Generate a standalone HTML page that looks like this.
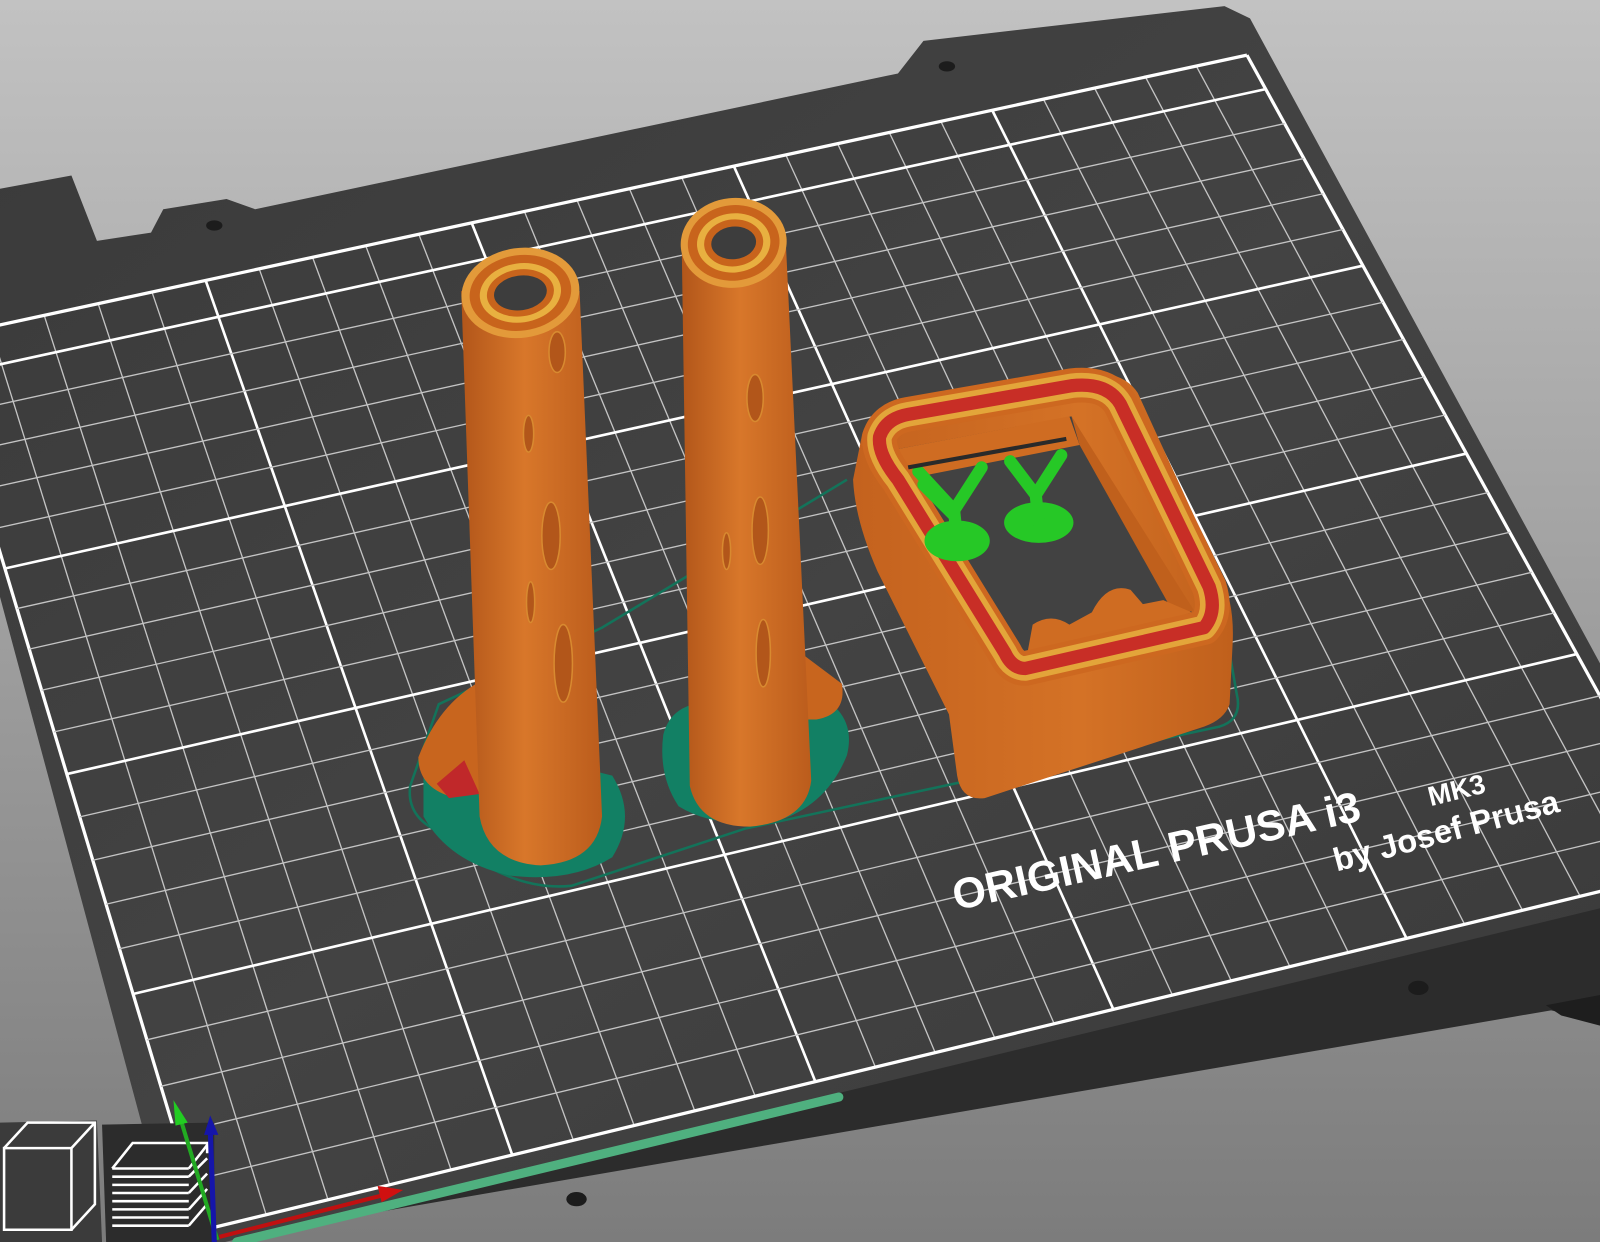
<!DOCTYPE html>
<html><head><meta charset="utf-8"><style>
html,body{margin:0;padding:0;width:1600px;height:1242px;overflow:hidden;background:#a0a0a0}
svg{display:block}
</style></head><body>
<svg id="s" width="1600" height="1242" viewBox="0 0 1568 1217" preserveAspectRatio="none" xmlns="http://www.w3.org/2000/svg">
<defs>
<linearGradient id="bg" x1="0" y1="0" x2="0" y2="1"><stop offset="0" stop-color="#c2c2c2"/><stop offset="1" stop-color="#7c7c7c"/></linearGradient>
<linearGradient id="bed" x1="0" y1="0" x2="1" y2="1"><stop offset="0" stop-color="#3a3a3a"/><stop offset="0.5" stop-color="#434343"/><stop offset="1" stop-color="#3a3a3a"/></linearGradient>
<linearGradient id="cyl" x1="0" y1="0" x2="1" y2="0"><stop offset="0" stop-color="#b2561a"/><stop offset="0.45" stop-color="#d8772a"/><stop offset="1" stop-color="#bb5c1c"/></linearGradient>
<linearGradient id="box" x1="0" y1="0" x2="1" y2="0"><stop offset="0" stop-color="#c4621e"/><stop offset="0.6" stop-color="#d47226"/><stop offset="1" stop-color="#c0601c"/></linearGradient>
</defs>
<rect width="1568" height="1217" fill="url(#bg)"/>
<polygon points="1568,880 1568,1000 1520,990 200,1217 160,1217 170,1200" fill="#2c2c2c"/>
<polygon points="1515,985 1568,975 1568,1005 1530,995" fill="#1e1e1e"/>
<polygon points="0,185 70,172 95,236 148,228 160,205 222,195 250,205 880,72 905,40 1200,6 1225,18 1568,650 1568,890 200,1222 170,1217 0,585" fill="url(#bed)"/>
<ellipse cx="210" cy="221" rx="8" ry="5" fill="#1c1c1c"/>
<ellipse cx="928" cy="65" rx="8" ry="5" fill="#1c1c1c"/>
<ellipse cx="1390" cy="968" rx="10" ry="7" fill="#1c1c1c"/>
<ellipse cx="565" cy="1175" rx="10" ry="7" fill="#1c1c1c"/>
<g id="grid"></g>
<g fill="#ffffff" font-family="Liberation Sans, sans-serif">
<text x="0" y="0" font-size="42" font-weight="bold" transform="translate(937,892) rotate(-12.5)">ORIGINAL PRUSA i3</text>
<text x="0" y="0" font-size="27" font-weight="bold" transform="translate(1402,790) rotate(-14)">MK3</text>
<text x="0" y="0" font-size="32" font-weight="bold" transform="translate(1310,854) rotate(-15)">by Josef Prusa</text>
</g>
<path d="M402,770 Q398,800 430,815 L480,850 Q520,872 560,868 L730,812 L1195,712 Q1218,705 1212,680 L1205,640 M402,770 L430,690 L590,615 L830,470" fill="none" stroke="#13735a" stroke-width="2.5"/>
<path d="M415,760 Q440,720 480,730 L600,760 Q625,800 600,840 Q560,865 500,858 Q440,845 415,800Z" fill="#128064"/>
<path d="M650,720 Q660,680 720,690 L800,680 Q840,700 830,740 Q810,790 760,805 Q700,812 665,790 Q645,760 650,720Z" fill="#128064"/>
<path d="M410,742 Q430,690 470,668 L495,670 L500,775 L440,780 Q410,770 410,742Z" fill="#c8651e"/>
<polygon points="428,768 455,745 470,778 440,782" fill="#c0282a"/>
<path d="M785,640 L825,670 Q830,700 800,705 L785,705Z" fill="#c8651e"/>
<path d="M452,285 L470,800 Q478,845 530,848 Q585,845 590,800 L568,285Z" fill="url(#cyl)"/>
<ellipse cx="510" cy="287" rx="58" ry="44" fill="#e39a3a" transform="rotate(-8 510 287)"/>
<ellipse cx="510" cy="287" rx="50" ry="37" fill="#c8641c" transform="rotate(-8 510 287)"/>
<ellipse cx="510" cy="287" rx="40" ry="29" fill="#e8b040" transform="rotate(-8 510 287)"/>
<ellipse cx="510" cy="287" rx="33" ry="23" fill="#c8641c" transform="rotate(-8 510 287)"/>
<ellipse cx="510" cy="287" rx="26" ry="17" fill="#3d3d3d" transform="rotate(-8 510 287)"/>
<g fill="#b2561a" stroke="#d88a30" stroke-width="1.5">
<ellipse cx="546" cy="345" rx="8" ry="20"/><ellipse cx="518" cy="425" rx="5" ry="18"/><ellipse cx="540" cy="525" rx="9" ry="33"/><ellipse cx="552" cy="650" rx="9" ry="38"/><ellipse cx="520" cy="590" rx="4" ry="20"/></g>
<path d="M668,235 L676,770 Q685,810 735,810 Q790,805 795,765 L770,235Z" fill="url(#cyl)"/>
<ellipse cx="719" cy="238" rx="52" ry="44" fill="#e39a3a" transform="rotate(-6 719 238)"/>
<ellipse cx="719" cy="238" rx="45" ry="37" fill="#c8641c" transform="rotate(-6 719 238)"/>
<ellipse cx="719" cy="238" rx="36" ry="29" fill="#e8b040" transform="rotate(-6 719 238)"/>
<ellipse cx="719" cy="238" rx="29" ry="23" fill="#c8641c" transform="rotate(-6 719 238)"/>
<ellipse cx="719" cy="238" rx="22" ry="16" fill="#3d3d3d" transform="rotate(-6 719 238)"/>
<g fill="#b2561a" stroke="#d88a30" stroke-width="1.5">
<ellipse cx="740" cy="390" rx="8" ry="23"/><ellipse cx="745" cy="520" rx="8" ry="33"/><ellipse cx="748" cy="640" rx="7" ry="33"/><ellipse cx="712" cy="540" rx="4" ry="18"/></g>
<path d="M845,425 Q850,408 870,402 L1000,378 L1060,366 Q1100,362 1115,385 L1195,560 Q1210,590 1208,630 L1205,690 Q1200,705 1180,712 L965,782 Q942,785 938,760 L930,700 Q890,620 860,560 Q838,510 836,470 Z" fill="url(#box)"/>
<path d="M880,440 L1050,408 L1168,600 L1000,645 Z" fill="#424242"/>
<polygon points="880,440 1048,408 1058,436 895,468" fill="#cf6c22"/>
<polygon points="1050,408 1170,598 1152,604 1058,436" fill="#c0601c"/>
<path d="M1005,650 L1012,612 Q1030,600 1048,612 L1070,600 Q1085,570 1108,578 L1120,592 L1140,588 L1168,600 Z" fill="#cf6c22"/>
<g fill="none" stroke-linejoin="round">
<path d="M862,428 Q868,410 890,406 L1050,378 Q1085,374 1098,396 L1185,575 Q1193,600 1180,615 L1005,655 Q992,655 985,640 L880,470 Q860,445 862,428 Z" stroke="#cd6820" stroke-width="34"/>
<path d="M862,428 Q868,410 890,406 L1050,378 Q1085,374 1098,396 L1185,575 Q1193,600 1180,615 L1005,655 Q992,655 985,640 L880,470 Q860,445 862,428 Z" stroke="#e3a53a" stroke-width="24"/>
<path d="M862,428 Q868,410 890,406 L1050,378 Q1085,374 1098,396 L1185,575 Q1193,600 1180,615 L1005,655 Q992,655 985,640 L880,470 Q860,445 862,428 Z" stroke="#c82e26" stroke-width="13"/>
</g>
<g fill="#26c826" stroke="#26c826" stroke-linecap="round" stroke-linejoin="round">
<ellipse cx="938" cy="530" rx="32" ry="20" stroke="none"/><ellipse cx="1018" cy="512" rx="34" ry="20" stroke="none"/>
<path d="M900,462 L935,500 L962,458 M905,475 L935,505 M935,500 L938,530" fill="none" stroke-width="12"/>
<path d="M990,452 L1015,485 L1040,446 M1015,485 L1018,512" fill="none" stroke-width="12"/>
</g>
<line x1="890" y1="458" x2="1045" y2="430" stroke="#2a2a2a" stroke-width="4"/>
<line x1="232" y1="1217" x2="822" y2="1075" stroke="#4fb07f" stroke-width="9" stroke-linecap="round"/>
<polygon points="0,1100 95,1098 100,1217 0,1217" fill="#3b3b3b"/>
<polygon points="100,1102 210,1100 210,1217 104,1217" fill="#2c2c2c"/>
<g fill="none" stroke="#ffffff" stroke-width="2.5">
<polygon points="4,1125 70,1125 70,1205 4,1205"/><polyline points="4,1125 27,1100 93,1100 93,1180 70,1205"/><line x1="70" y1="1125" x2="93" y2="1100"/>
<polyline points="110,1145 130,1120 203,1120 203,1130"/><line x1="110" y1="1145" x2="185" y2="1145"/><line x1="185" y1="1145" x2="203" y2="1122"/>
</g>
<g stroke="#ffffff" stroke-width="2.5">
<line x1="110" y1="1153" x2="185" y2="1153"/><line x1="110" y1="1161" x2="185" y2="1161"/><line x1="110" y1="1169" x2="185" y2="1169"/><line x1="110" y1="1177" x2="185" y2="1177"/><line x1="110" y1="1185" x2="185" y2="1185"/><line x1="110" y1="1193" x2="185" y2="1193"/><line x1="110" y1="1201" x2="185" y2="1201"/>
<line x1="185" y1="1201" x2="203" y2="1180"/><line x1="185" y1="1185" x2="203" y2="1165"/><line x1="185" y1="1169" x2="203" y2="1150"/><line x1="185" y1="1153" x2="203" y2="1135"/>
</g>
<line x1="175" y1="1090" x2="213" y2="1215" stroke="#22aa22" stroke-width="4"/>
<polygon points="170,1078 184,1100 172,1103" fill="#22cc22"/>
<line x1="206" y1="1105" x2="210" y2="1217" stroke="#1515aa" stroke-width="5"/>
<polygon points="206,1093 214,1112 200,1112" fill="#1515aa"/>
<line x1="215" y1="1212" x2="380" y2="1170" stroke="#c01010" stroke-width="4"/>
<polygon points="395,1166 370,1162 374,1178" fill="#d01010"/>
</svg>
<script>
(function(){
var P=[[200,1205],[1661,851],[1222,54],[-63,332]];
var x0=P[0][0],y0=P[0][1],x1=P[1][0],y1=P[1][1],x2=P[2][0],y2=P[2][1],x3=P[3][0],y3=P[3][1];
var dx1=x1-x2,dx2=x3-x2,dx3=x0-x1+x2-x3,dy1=y1-y2,dy2=y3-y2,dy3=y0-y1+y2-y3;
var den=dx1*dy2-dx2*dy1,g=(dx3*dy2-dx2*dy3)/den,h=(dx1*dy3-dx3*dy1)/den;
var a=x1-x0+g*x1,b=x3-x0+h*x3,c=x0,d=y1-y0+g*y1,e=y3-y0+h*y3,f=y0;
function H(u,v){var w=g*u+h*v+1;return[(a*u+b*v+c)/w,(d*u+e*v+f)/w];}
var G=document.getElementById('grid'),ns='http://www.w3.org/2000/svg';
function L(p,q,w,col){var l=document.createElementNS(ns,'line');l.setAttribute('x1',p[0]);l.setAttribute('y1',p[1]);l.setAttribute('x2',q[0]);l.setAttribute('y2',q[1]);l.setAttribute('stroke',col);l.setAttribute('stroke-width',w);G.appendChild(l);}
for(var x=0;x<=250;x+=10){var m=(x%50==0);var bd=(x==0||x==250);L(H(x/250,0),H(x/250,1),bd?3.2:(m?2.6:1.3),m||bd?'#ffffff':'#c4c4c4');}
for(var y=0;y<=210;y+=10){var m2=(y%50==0);var bd2=(y==0||y==210);L(H(0,y/210),H(1,y/210),bd2?3.2:(m2?2.6:1.3),m2||bd2?'#ffffff':'#c4c4c4');}
})();
</script>
</body></html>
